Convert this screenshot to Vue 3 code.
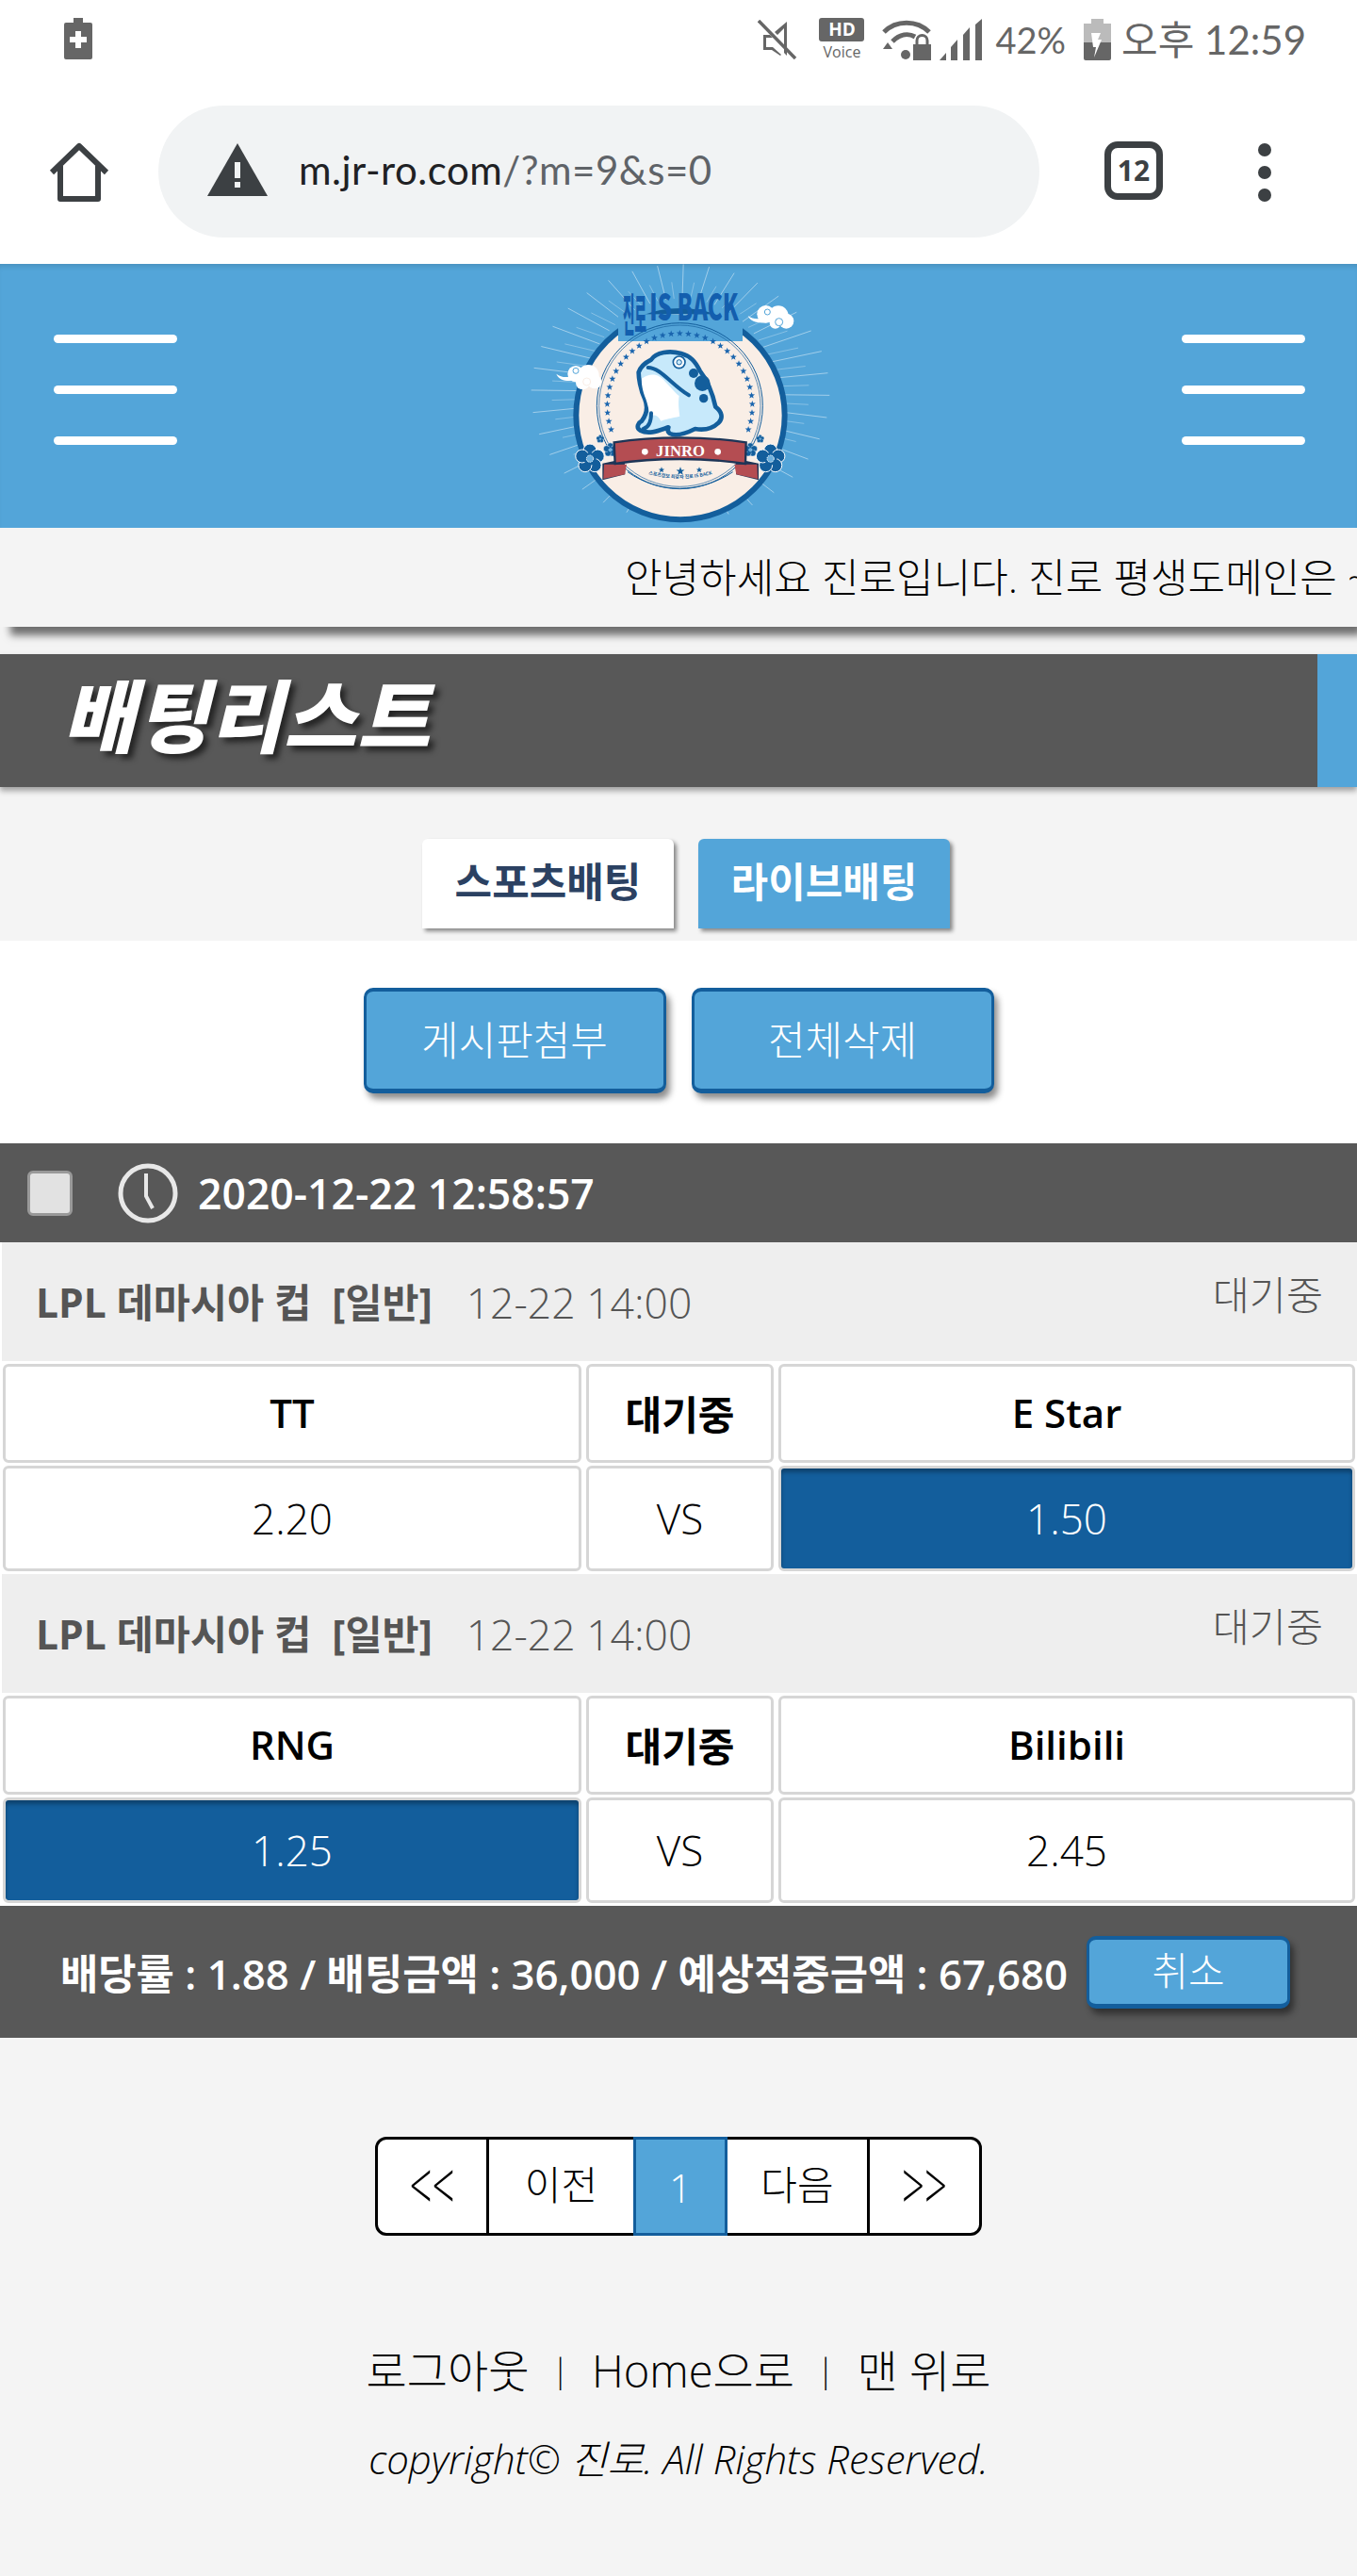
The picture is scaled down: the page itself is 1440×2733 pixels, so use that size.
<template>
  <div class="page">
    <!-- phone status bar -->
    <div class="status">
      <svg class="st-charge" width="30" height="44" viewBox="0 0 30 44">
        <path fill="#666" d="M10 0h10v5h8a2 2 0 0 1 2 2v35a2 2 0 0 1-2 2H2a2 2 0 0 1-2-2V7a2 2 0 0 1 2-2h8z" />
        <path fill="#fff" d="M12 14h6v6h6v6h-6v6h-6v-6H6v-6h6z" />
      </svg>
      <div class="st-right">
        <svg width="42" height="42" viewBox="0 0 42 42">
          <path fill="#666" d="M31 2v36l-3-3V9l-7 7-3-3zM6 16h7l3 3H9v10h7l9 8-1 1-9-6H6z" />
          <path stroke="#666" stroke-width="3.5" d="M1 1l39 40" />
        </svg>
        <div class="hd">
          <span class="hd-box">HD</span>
          <span class="hd-voice">Voice</span>
        </div>
        <svg width="52" height="44" viewBox="0 0 52 44">
          <path fill="none" stroke="#666" stroke-width="5" d="M2 14c13-13 35-13 48 0M11 24c8-8 17-9 24-5" />
          <path fill="#666" d="M1 32h10l-5-7z" />
          <circle cx="25" cy="38" r="5" fill="#666" />
          <rect x="33" y="27" width="19" height="17" fill="#666" />
          <path fill="none" stroke="#666" stroke-width="3" d="M37 27v-4a5.500 5.500 0 0 1 11 0v4" />
        </svg>
        <svg width="45" height="44" viewBox="0 0 45 44">
          <path fill="#666" d="M0 44l7-8v8zM12 44V30l7-8v22zM25 44V17l7-8v35zM38 44V6l7-6v44z" />
        </svg>
        <span class="st-pct">42%</span>
        <svg width="29" height="44" viewBox="0 0 29 44">
          <path fill="#bbb" d="M8 0h13v5h8v20H0V5h8z" />
          <path fill="#666" d="M0 25h29v17a2 2 0 0 1-2 2H2a2 2 0 0 1-2-2z" />
          <path fill="#fff" d="M17 15h-9l2 15h3l-2 11 8-19h-4l3-7z" />
        </svg>
        <span class="st-time">오후 12:59</span>
      </div>
    </div>

    <!-- browser toolbar -->
    <div class="toolbar">
      <svg class="tb-home" width="64" height="64" viewBox="0 0 64 64">
        <path fill="none" stroke="#3c4043" stroke-width="6" stroke-linejoin="round" d="M3 33L32 5l29 28M12 26v35h40V26" />
      </svg>
      <div class="pill">
        <svg width="64" height="56" viewBox="0 0 64 56">
          <path fill="#3c4043" d="M32 0l32 56H0z" />
          <rect x="29" y="20" width="6" height="17" fill="#f1f3f4" />
          <rect x="29" y="41" width="6" height="6" fill="#f1f3f4" />
        </svg>
        <span class="url"><b>m.jr-ro.com</b>/?m=9&amp;s=0</span>
      </div>
      <div class="tabs-count">12</div>
      <div class="dots"><i></i><i></i><i></i></div>
    </div>

    <!-- site header -->
    <header class="header">
      <div class="burger"><i></i><i></i><i></i></div>
      <svg class="logo" width="360" height="280" viewBox="0 30 1080 840">
        <g stroke="#fff" stroke-opacity="0.45">
          <line v-for="r in rays" :key="r.id" :x1="r.x1" :y1="r.y1" :x2="r.x2" :y2="r.y2" :stroke-width="r.w" />
        </g>
        <circle cx="543" cy="512" r="332" fill="#f9eee6" stroke="#135e9c" stroke-width="18" />
        <rect x="345" y="190" width="396" height="86" fill="#53a5d9" />
        <circle cx="541" cy="482" r="264" fill="none" stroke="#135e9c" stroke-width="3" />
        <circle cx="541" cy="482" r="257" fill="none" stroke="#135e9c" stroke-width="2" />
        <polygon v-for="s in stars" :key="s.id" :points="s.pts" fill="#1a65ae" />
        <!-- frog -->
        <path fill="#c7e9fb" stroke="#135e9c" stroke-width="14" stroke-linejoin="round"
          d="M450 335c15-25 60-30 95-20 30 8 45 25 60 55 20 25 40 70 50 115 20 15 25 35 10 50-20 20-45 25-75 20-30 15-60 25-80 15-8-5-8-12-5-20-25 8-60 25-90 10-15-10-5-25 5-30 15-20 20-45 10-70-15-30-20-70-20-85 5-15 20-30 40-40z" />
        <path fill="#fff" d="M420 395c30-20 55-15 75 10 20 20 30 35 44 45-4 25 0 50 2 65-25 5-50 10-60 15-10-20-25-25-33-10-5-25-10-45-15-60-10-25-15-50-13-65z" />
        <path fill="none" stroke="#135e9c" stroke-width="12" stroke-linecap="round" d="M440 360c40 0 75 55 130 88M450 505c0 25-5 45-25 50" />
        <circle cx="539" cy="343" r="19" fill="#fff" stroke="#135e9c" stroke-width="5" />
        <circle cx="539" cy="343" r="8" fill="#c7e9fb" stroke="#135e9c" stroke-width="3" />
        <circle cx="585" cy="378" r="15" fill="#135e9c" />
        <circle cx="613" cy="410" r="25" fill="#135e9c" />
        <circle cx="617" cy="458" r="14" fill="#135e9c" />
        <!-- flowers -->
        <g v-for="f in flowers" :key="f.id" :transform="f.tf">
          <circle v-for="p in petals" :key="p.id" :cx="p.x" :cy="p.y" r="21" fill="#135e9c" stroke="#fff" stroke-width="3" />
          <circle r="20" fill="#135e9c" />
          <circle r="11" fill="#6fb1de" stroke="#fff" stroke-width="3" stroke-dasharray="4 3" />
        </g>
        <!-- ribbon -->
        <path fill="#1d3557" d="M365 650l-70 15v53l72-18zM720 650l72 15v53l-72-18z" />
        <path fill="#b44d52" d="M372 668l-72 0-2 46 68-14zM715 668l72 0 2 46-68-14z" />
        <path fill="#b44d52" stroke="#1d3557" stroke-width="7" d="M332 600c130-20 290-20 420 0l-2 68c-130-20-285-20-415 0z" transform="translate(0 -2)" />
        <circle cx="430" cy="628" r="10" fill="#fff" />
        <circle cx="662" cy="628" r="10" fill="#fff" />
        <text x="543" y="642" text-anchor="middle" class="lg-jinro">JINRO</text>
        <path id="lgcurve" d="M420 692c80 28 170 28 245 0" fill="none" />
        <path d="M375 692c100 70 230 70 335 0" fill="none" stroke="#135e9c" stroke-width="3" />
        <text class="lg-sub"><textPath href="#lgcurve" startOffset="50%" text-anchor="middle">스포츠정보 최강자 진로 IS BACK</textPath></text>
        <polygon v-for="s in subStars" :key="s.id" :points="s.pts" fill="#135e9c" />
        <!-- clouds -->
        <g fill="#fff">
          <circle cx="815" cy="190" r="28" />
          <circle cx="855" cy="195" r="32" />
          <circle cx="880" cy="212" r="24" />
          <circle cx="845" cy="218" r="18" />
          <path d="M758 195c20 15 45 10 60 0l10 20c-30 5-60 3-70-20z" />
          <circle cx="210" cy="380" r="26" />
          <circle cx="250" cy="385" r="34" />
          <circle cx="232" cy="408" r="22" />
          <circle cx="270" cy="405" r="22" />
          <path d="M148 380c20 15 45 12 60 0l5 20c-30 5-55 3-65-20z" />
        </g>
        <g fill="none" stroke="#53a5d9" stroke-width="3">
          <circle cx="820" cy="183" r="9" />
          <circle cx="857" cy="215" r="12" />
          <circle cx="210" cy="370" r="9" />
          <circle cx="245" cy="405" r="12" stroke="#f9eee6" />
        </g>
        <text class="lg-title lg-ko" transform="translate(360 242) scale(0.29 1)">진로</text>
        <text class="lg-title" transform="translate(445 210) scale(0.62 1)">IS BACK</text>
      </svg>
      <div class="burger"><i></i><i></i><i></i></div>
    </header>

    <div class="ticker">안녕하세요 진로입니다. 진로 평생도메인은 ~</div>

    <div class="titlebar">
      <h1>배팅리스트</h1>
    </div>

    <div class="tabs">
      <span class="tab">스포츠배팅</span>
      <span class="tab active">라이브배팅</span>
    </div>

    <div class="actions">
      <span class="btn big">게시판첨부</span>
      <span class="btn big">전체삭제</span>
    </div>

    <div class="datebar">
      <span class="check"></span>
      <svg width="66" height="66" viewBox="0 0 66 66">
        <circle cx="33" cy="33" r="29" fill="none" stroke="#e8e8e8" stroke-width="5" />
        <path fill="none" stroke="#e8e8e8" stroke-width="4" d="M31 12v24l7 13" />
      </svg>
      <span class="date">2020-12-22 12:58:57</span>
    </div>

    <div v-for="m in matches" :key="m.home" class="match">
      <div class="m-head">
        <span class="m-league">LPL 데마시아 컵&nbsp; [일반]</span>
        <span class="m-time">12-22 14:00</span>
        <span class="m-state">대기중</span>
      </div>
      <div class="m-grid">
        <div class="cell name">{{ m.home }}</div>
        <div class="cell name">대기중</div>
        <div class="cell name">{{ m.away }}</div>
        <div class="cell odd" :class="{ picked: m.pick === 'home' }">{{ m.homeOdd }}</div>
        <div class="cell odd">VS</div>
        <div class="cell odd" :class="{ picked: m.pick === 'away' }">{{ m.awayOdd }}</div>
      </div>
    </div>

    <div class="sumbar">
      <span>배당률 : 1.88 / 배팅금액 : 36,000 / 예상적중금액 : 67,680</span>
      <span class="btn small">취소</span>
    </div>

    <div class="pager">
      <span class="pg first"><em>&lt;&lt;</em></span>
      <span class="pg prev">이전</span>
      <span class="pg cur">1</span>
      <span class="pg next">다음</span>
      <span class="pg last"><em>&gt;&gt;</em></span>
    </div>

    <div class="links">
      <span>로그아웃</span><span class="sep">|</span><span>Home으로</span><span class="sep">|</span><span>맨 위로</span>
    </div>
    <div class="copy">copyright© 진로. All Rights Reserved.</div>
  </div>
</template>

<script setup>
const matches = [
  { home: 'TT', away: 'E Star', homeOdd: '2.20', awayOdd: '1.50', pick: 'away' },
  { home: 'RNG', away: 'Bilibili', homeOdd: '1.25', awayOdd: '2.45', pick: 'home' },
]

function starPoints(cx, cy, r) {
  const pts = []
  for (let i = 0; i < 10; i++) {
    const a = -Math.PI / 2 + (i * Math.PI) / 5
    const d = i % 2 ? r * 0.42 : r
    pts.push(`${(cx + Math.cos(a) * d).toFixed(1)},${(cy + Math.sin(a) * d).toFixed(1)}`)
  }
  return pts.join(' ')
}

// sunburst behind the badge
const rays = []
for (let i = 0; i < 72; i++) {
  const a = (i * Math.PI * 2) / 72 + 0.02
  const long = i % 2 === 0
  const inner = 300
  const outer = long ? 475 : 410
  rays.push({
    id: i,
    x1: 543 + Math.cos(a) * inner,
    y1: 440 + Math.sin(a) * inner,
    x2: 543 + Math.cos(a) * outer,
    y2: 440 + Math.sin(a) * outer * 0.86,
    w: long ? 3 : 2,
  })
}

const stars = []
for (let i = 0; i < 33; i++) {
  const a = ((-109 + (i * 218) / 32) * Math.PI) / 180
  stars.push({
    id: i,
    pts: starPoints(541 + Math.sin(a) * 231, 482 - Math.cos(a) * 231, 11),
  })
}

const subStars = [
  { id: 1, pts: starPoints(483, 686, 10) },
  { id: 2, pts: starPoints(543, 690, 14) },
  { id: 3, pts: starPoints(603, 686, 10) },
]

const flowers = [
  { id: 1, tf: 'translate(255 650)' },
  { id: 2, tf: 'translate(830 650)' },
  { id: 3, tf: 'translate(320 622) scale(0.48)' },
  { id: 4, tf: 'translate(766 622) scale(0.48)' },
  { id: 5, tf: 'translate(288 587) scale(0.28)' },
  { id: 6, tf: 'translate(797 587) scale(0.28)' },
]

const petals = [0, 1, 2, 3, 4].map((i) => {
  const a = -Math.PI / 2 + (i * Math.PI * 2) / 5
  return { id: i, x: Math.cos(a) * 26, y: Math.sin(a) * 26 }
})
</script>

<style>
html,
body {
  background: #f4f4f4;
}
</style>

<style scoped>
.page {
  width: 1440px;
  min-height: 2733px;
  background: #f4f4f4;
  font-family: "Open Sans", "Noto Sans CJK KR", sans-serif;
  color: #000;
  overflow: hidden;
}

.status {
  height: 90px;
  background: #fff;
  display: flex;
  justify-content: space-between;
  align-items: flex-start;
  padding: 19px 54px 0 68px;
  box-sizing: border-box;
}

.st-right {
  display: flex;
  align-items: center;
  gap: 9px;
  color: #666;
}

.hd {
  display: flex;
  flex-direction: column;
  align-items: center;
  width: 48px;
  margin: 0 10px 0 14px;
}

.hd-box {
  width: 48px;
  height: 25px;
  border-radius: 3px;
  background: #666;
  color: #fff;
  font-size: 19px;
  font-weight: 700;
  line-height: 25px;
  text-align: center;
}

.hd-voice {
  font-size: 16px;
  line-height: 18px;
  margin-top: 2px;
}

.st-pct {
  font-size: 38px;
  line-height: 44px;
  font-family: "Lato", "Noto Sans CJK KR", sans-serif;
  margin: 0 10px 0 5px;
}

.st-time {
  font-size: 42px;
  line-height: 44px;
  font-family: "Lato", "Noto Sans CJK KR", sans-serif;
  margin-left: 2px;
}

.toolbar {
  height: 190px;
  background: #fff;
  box-sizing: border-box;
  display: flex;
  align-items: flex-start;
  padding-top: 22px;
}

.tb-home {
  margin: 38px 0 0 52px;
}

.pill {
  width: 935px;
  height: 140px;
  border-radius: 70px;
  background: #f1f3f4;
  margin-left: 52px;
  display: flex;
  align-items: center;
  box-sizing: border-box;
  padding: 0 0 4px 52px;
  gap: 33px;
}

.url {
  font-size: 42px;
  color: #5f6368;
  font-family: "Lato", sans-serif;
  letter-spacing: 0.5px;
}

.url b {
  font-weight: 400;
  color: #202124;
}

.tabs-count {
  width: 62px;
  height: 62px;
  margin: 38px 0 0 69px;
  border: 7px solid #3c4043;
  border-radius: 14px;
  box-sizing: border-box;
  font-size: 30px;
  font-weight: 700;
  color: #3c4043;
  text-align: center;
  line-height: 47px;
}

.dots {
  display: flex;
  flex-direction: column;
  gap: 10px;
  margin: 40px 0 0 101px;
}

.dots i {
  width: 14px;
  height: 14px;
  border-radius: 50%;
  background: #3c4043;
}

.header {
  height: 280px;
  background: #53a5d9;
  box-shadow: inset 0 6px 6px -4px rgba(0, 0, 0, 0.15);
  display: flex;
  justify-content: space-between;
  align-items: center;
  padding: 0 55px 0 57px;
  box-sizing: border-box;
  overflow: hidden;
}

.logo {
  flex: none;
}

.burger {
  width: 131px;
  display: flex;
  flex-direction: column;
  gap: 45px;
  margin-bottom: 13px;
}

.burger i {
  height: 9px;
  border-radius: 5px;
  background: #fff;
}

.ticker {
  height: 105px;
  box-sizing: border-box;
  padding-left: 663px;
  font-size: 43px;
  font-weight: 300;
  line-height: 105px;
  white-space: nowrap;
  overflow: hidden;
  background: #f4f4f4;
  box-shadow: 8px 12px 8px -3px rgba(0, 0, 0, 0.55);
}

.titlebar {
  height: 141px;
  margin-top: 29px;
  background: #585858;
  border-right: 42px solid #53a5d9;
  box-shadow: 0 4px 6px rgba(0, 0, 0, 0.35);
  box-sizing: border-box;
  display: flex;
  align-items: center;
}

.titlebar h1 {
  margin: 0 0 18px 66px;
  font-size: 84px;
  font-weight: 900;
  font-style: italic;
  color: #fff;
  letter-spacing: 1px;
  text-shadow: 5px 5px 6px rgba(0, 0, 0, 0.6);
}

.tabs {
  height: 163px;
  box-sizing: border-box;
  padding: 55px 0 0 16px;
  display: flex;
  justify-content: center;
  gap: 26px;
}

.tab {
  width: 267px;
  height: 95px;
  border-radius: 6px 6px 0 0;
  background: #fff;
  color: #2b4162;
  font-size: 43px;
  font-weight: 700;
  line-height: 91px;
  text-align: center;
  box-shadow: 3px 3px 4px rgba(0, 0, 0, 0.45);
}

.tab.active {
  background: #53a5d9;
  color: #fff;
}

.actions {
  height: 215px;
  background: #fff;
  box-sizing: border-box;
  padding-top: 50px;
  display: flex;
  justify-content: center;
  gap: 27px;
}

.btn {
  background: #53a5d9;
  color: #fff;
  border: 3px solid #135e9c;
  border-top-width: 4px;
  border-bottom-width: 5px;
  border-radius: 10px;
  box-sizing: border-box;
  text-align: center;
  box-shadow: 4px 6px 7px rgba(0, 0, 0, 0.45);
}

.big {
  width: 321px;
  height: 112px;
  font-size: 43px;
  font-weight: 300;
  line-height: 104px;
}

.datebar {
  height: 105px;
  background: #585858;
  display: flex;
  align-items: center;
  padding-left: 29px;
}

.check {
  width: 48px;
  height: 48px;
  box-sizing: border-box;
  border-radius: 6px;
  border: 3px solid #999;
  background: #e2e2e2;
  margin-right: 47px;
}

.datebar svg {
  margin-right: 20px;
}

.date {
  color: #fff;
  font-size: 44.500px;
  font-weight: 600;
}

.match {
  background: #fff;
  padding-bottom: 3px;
}

.m-head {
  height: 126px;
  margin-left: 2px;
  background: #eee;
  display: flex;
  align-items: flex-start;
  box-sizing: border-box;
  padding: 36px 36px 0 36px;
  font-size: 42.500px;
  line-height: 56px;
  color: #555;
}

.m-league {
  font-weight: 700;
}

.m-time {
  margin-left: 36px;
  font-size: 44.500px;
  font-weight: 300;
  color: #555;
}

.m-state {
  margin-left: auto;
  margin-top: -8px;
  font-weight: 300;
  color: #555;
}

.m-grid {
  display: grid;
  grid-template-columns: 614px 199px 612px;
  grid-template-rows: 105px 112px;
  gap: 3px 5px;
  padding: 3px 2px 0 3px;
}

.cell {
  border: 3px solid #d6d6d6;
  border-radius: 6px;
  background: #fff;
  display: flex;
  align-items: center;
  justify-content: center;
  box-sizing: border-box;
}

.name {
  font-size: 42px;
  font-weight: 600;
  padding-bottom: 2px;
}

.odd {
  font-size: 44px;
  font-weight: 300;
}

.picked {
  background: #135e9c;
  color: #fff;
  box-shadow: inset 0 4px 4px rgba(0, 0, 0, 0.3);
}

.sumbar {
  height: 140px;
  background: #585858;
  color: #fff;
  font-size: 43.800px;
  font-weight: 600;
  display: flex;
  align-items: center;
  padding-left: 64px;
  gap: 20px;
  white-space: nowrap;
}

.small {
  width: 216px;
  height: 77px;
  font-size: 42px;
  font-weight: 300;
  line-height: 66px;
}

.pager {
  display: flex;
  width: 644px;
  height: 105px;
  margin: 105px auto 0;
  box-sizing: border-box;
  border: 3px solid #000;
  border-radius: 12px;
  background: #fff;
  font-size: 42px;
  font-weight: 300;
  line-height: 96px;
  text-align: center;
}

.pg {
  box-sizing: border-box;
  border-right: 3px solid #000;
}

.pg em {
  display: inline-block;
  font-style: normal;
  transform: scaleY(1.7);
}

.first {
  width: 118px;
}

.prev {
  width: 153px;
  border-right: none;
}

.cur {
  width: 100px;
  margin: -3px 0;
  height: 105px;
  line-height: 102px;
  background: #53a5d9;
  color: #fff;
  border: 3px solid #135e9c;
}

.next {
  width: 151px;
}

.last {
  flex: 1;
  border-right: none;
}

.links {
  margin-top: 113px;
  display: flex;
  justify-content: center;
  gap: 24px;
  font-size: 47px;
  font-weight: 300;
  line-height: 60px;
}

.sep {
  font-size: 34px;
}

.copy {
  margin-top: 36px;
  text-align: center;
  font-size: 42px;
  line-height: 56px;
  font-style: italic;
  font-weight: 300;
}

.lg-jinro {
  font-family: "Liberation Serif", serif;
  font-size: 50px;
  font-weight: 700;
  fill: #fff;
}

.lg-sub {
  font-family: "Noto Sans CJK KR", sans-serif;
  font-size: 15px;
  font-weight: 700;
  fill: #135e9c;
}

.lg-title {
  font-family: "Noto Sans CJK KR", sans-serif;
  font-size: 116px;
  font-weight: 900;
  fill: #135eae;
}

.lg-ko {
  font-size: 140px;
}
</style>
